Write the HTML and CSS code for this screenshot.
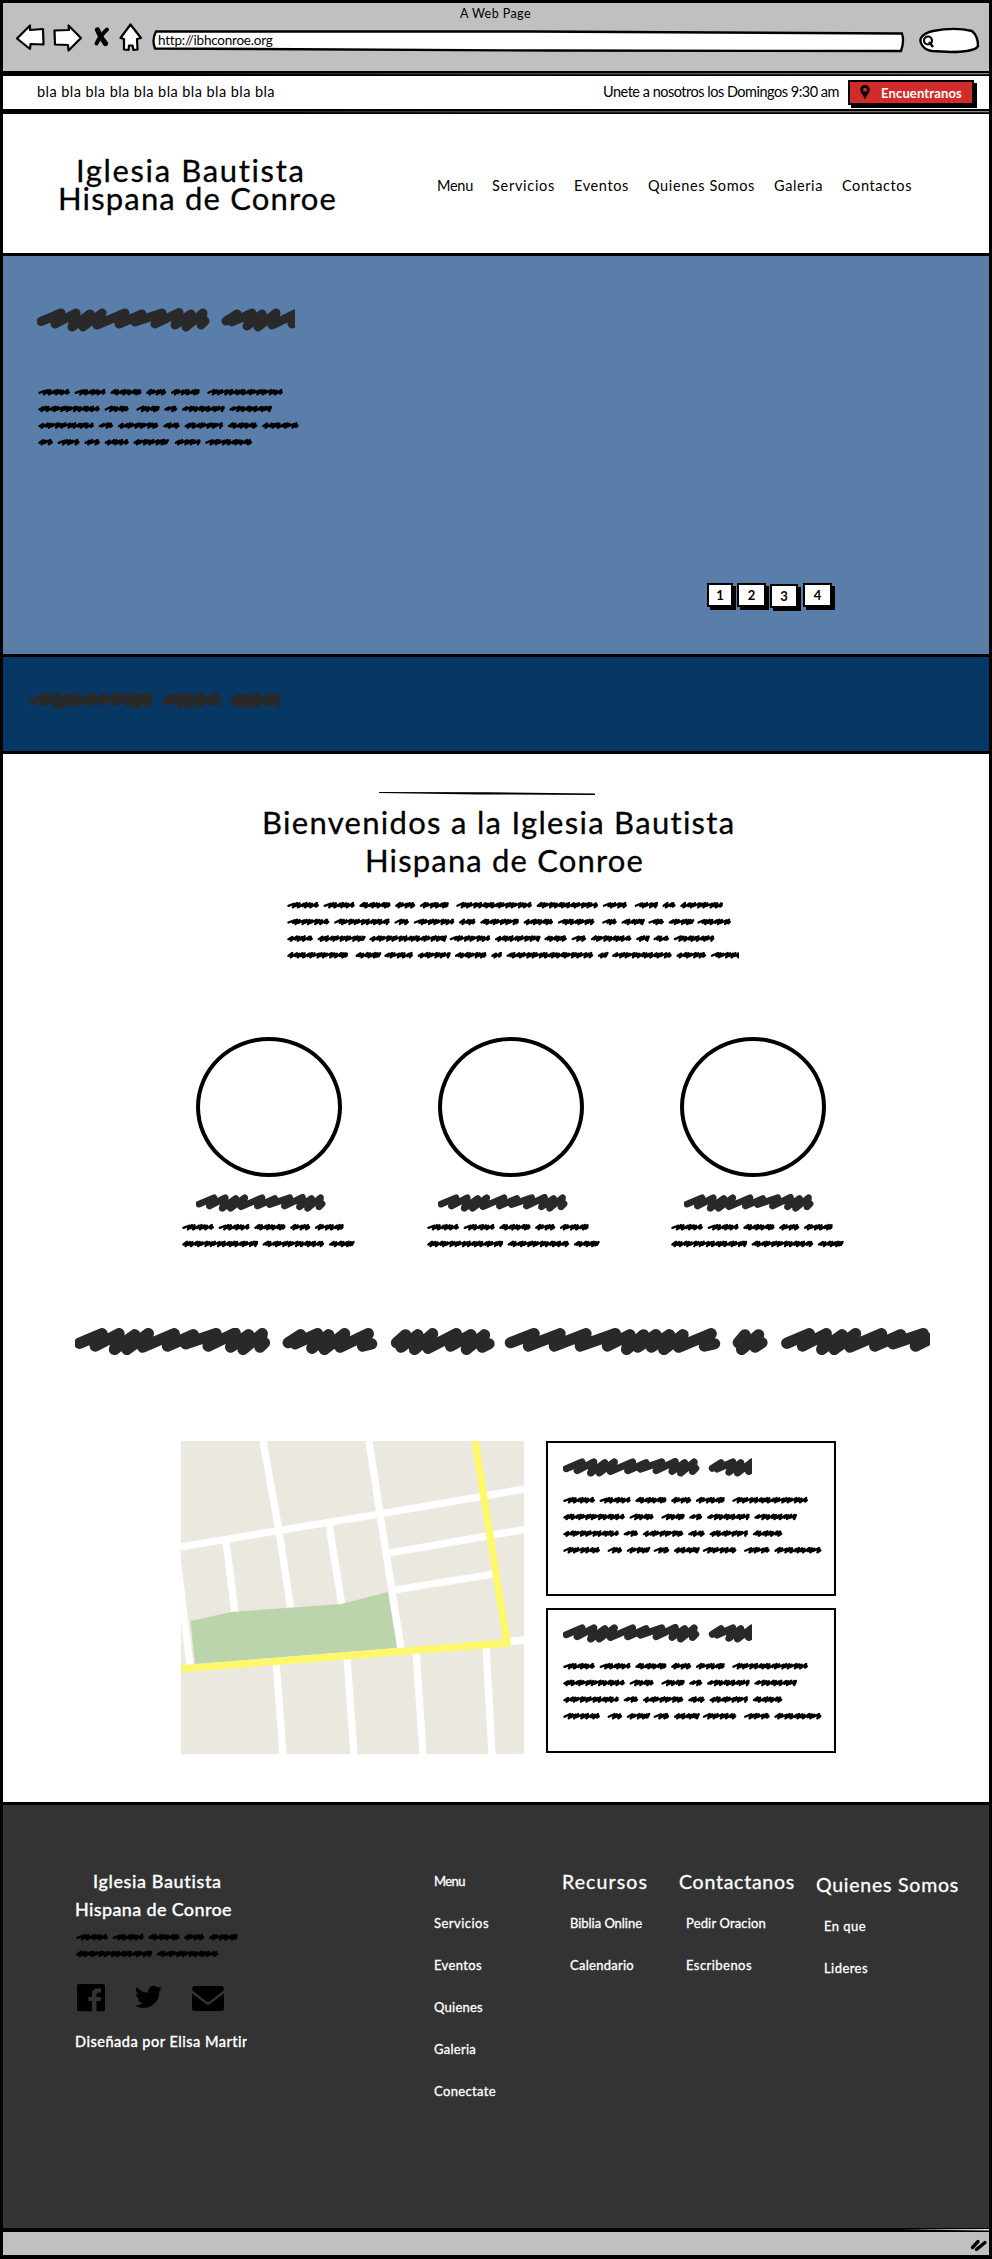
FILE: index.html
```html
<!DOCTYPE html>
<html lang="es">
<head>
<meta charset="utf-8">
<title>Iglesia Bautista Hispana de Conroe</title>
<link rel="stylesheet" href="styles.css">
</head>
<body>
<div class="window">
  <header class="chrome">
    <div class="chrome-title"><span data-fit="71">A Web Page</span></div>
    <div class="toolbar">
      <svg class="tools" width="130" height="30" viewBox="0 0 130 30">
        <g fill="#fff" stroke="#000" stroke-width="2.2" stroke-linejoin="round">
          <path d="M2 15.500L15 2.500L15 7L28 6L28.500 21.500L15.500 21L15 26Z"/>
          <path d="M39.500 7.500L54 7L53.500 2.500L66 15L53.500 27.500L53 22L40 21.500Z"/>
          <path d="M115.500 1.500L126 15L122 16L122.500 26.500L118.500 27L117.500 22.500L114 22.500L113.500 27L109 26.500L109 16L105.500 15Z"/>
        </g>
        <g stroke="#000" stroke-width="5.200" stroke-linecap="round" fill="none"><path d="M82.500 7Q85 14 90.500 20.500"/><path d="M92 6.500Q85 13 81.500 20.500" stroke-width="4"/></g>
      </svg>
      <div class="url">
        <svg class="backdrop" width="754" height="24" viewBox="0 0 754 24"><path d="M5 2.500L380 2.500L751 4.500Q753.500 12 750 22L400 21.500L4 19.500Q.5 11 5 2.500Z" fill="#fff" stroke="#000" stroke-width="2.300"/></svg>
        <span data-fit="114">http://ibhconroe.org</span>
      </div>
      <svg class="search" width="62" height="28" viewBox="0 0 62 28"><path d="M15 4C30 1 44 1.500 54 4Q60 9 60 19C58 24 42 25 33 25L14 24C5 23 1 15 3 11Q6 6 15 4Z" fill="#fff" stroke="#000" stroke-width="2.400"/><circle cx="10" cy="13.500" r="4" fill="none" stroke="#000" stroke-width="2.200"/><path d="M11 15L15 20" stroke="#000" stroke-width="2.500"/></svg>
    </div>
  </header>
  <svg class="rule" height="5" viewBox="0 0 986 5" preserveAspectRatio="none"><path d="M0 0H986V5H0Z"/><path d="M150 2.800L986 2V3.200L500 3.300Z" fill="#888"/></svg>

  <div class="topbar">
    <span class="slogan" data-fit="238">bla bla bla bla bla bla bla bla bla bla</span>
    <span class="invite" data-fit="236">Unete a nosotros los Domingos 9:30 am</span>
    <a class="find">
      <svg width="10" height="15" viewBox="0 0 10 15"><path fill-rule="evenodd" d="M5 0C2 0 .3 2.300.3 4.700C.3 8 3.500 10 5 14.500C6.500 10 9.700 8 9.700 4.700C9.700 2.300 8 0 5 0ZM5 2.800A2 2 0 1 1 5 6.800A2 2 0 1 1 5 2.800Z"/></svg>
      <span data-fit="81">Encuentranos</span>
    </a>
  </div>
  <svg class="rule" height="5" viewBox="0 0 986 5" preserveAspectRatio="none"><path d="M0 0H986V5H0Z"/><path d="M150 2.800L986 2V3.200L500 3.300Z" fill="#888"/></svg>

  <div class="masthead">
    <h1 class="brand"><span class="brand-top" data-fit="230">Iglesia Bautista</span><span data-fit="279">Hispana de Conroe</span></h1>
    <nav class="menu">
      <a data-fit="36">Menu</a><a data-fit="63">Servicios</a><a data-fit="55">Eventos</a><a data-fit="107">Quienes Somos</a><a data-fit="49">Galeria</a><a data-fit="70">Contactos</a>
    </nav>
  </div>
  <div class="line"></div>

  <section class="hero">
    <svg class="heading" data-scale="1" data-width="258"></svg>
    <svg class="copy" data-lines="32 31.500 31.500 20.500 29 | 76/62 24.500 | 23.500 13.500 43 42.500/56 15 41 17 39 30 37/15 22.500 16 24.500 34 | 26 47.500"></svg>
    <div class="pager"><a class="p1">1</a><a class="p2">2</a><a class="p3">3</a><a class="p4">4</a></div>
  </section>
  <div class="line"></div>
  <section class="band"><svg class="heading" data-scale=".715" data-width="250"></svg></section>
  <div class="line"></div>

  <main>
    <section class="welcome">
      <svg class="stroke" width="216" height="4" viewBox="0 0 216 4"><path d="M0 0L110 .3L216 1.600V3L100 2.400L0 1Z"/></svg>
      <h2><span class="w1" data-fit="474">Bienvenidos a la Iglesia Bautista</span><span class="w2" data-fit="279">Hispana de Conroe</span></h2>
      <svg class="copy" data-width="452" data-lines="32 31.500 31.500 20.500 29 | 76 62 24.500 | 23.500 13.500 43/42.500 56 15 41 17 39 30 37 | 15 22.500 16 24.500 34/26 47.500 76 41 45 23 15 41 13 16 41/61 | 24.500 29 33 32 11 87 10 60 30 30"></svg>
    </section>
    <section class="trio">
      <div class="person"><div class="avatar"></div><svg class="heading" data-scale=".75" data-width="130"></svg><svg class="copy" data-lines="32 31.500 31.500 20.500 29/76 62 24.500"></svg></div>
      <div class="person second"><div class="avatar"></div><svg class="heading" data-scale=".75" data-width="130"></svg><svg class="copy" data-lines="32 31.500 31.500 20.500 29/76 62 24.500"></svg></div>
      <div class="person third"><div class="avatar"></div><svg class="heading" data-scale=".75" data-width="130"></svg><svg class="copy" data-lines="32 31.500 31.500 20.500 29/76 62 24.500"></svg></div>
    </section>
    <section class="banner"><svg class="heading" data-scale="1.128" data-width="855" data-pen="10"></svg></section>
    <section class="place">
      <svg class="map" width="343" height="313" viewBox="0 0 343 313">
        <path fill="#ebe8e0" d="M0 0H343V313H0Z"/>
        <g fill="none" stroke="#fff" stroke-width="7.300">
          <path d="M0 106L98 89.500L199 73L343 48"/>
          <path d="M82 0L98 90L110 170"/><path d="M188 0L199 73L220 208"/>
          <path d="M45 100L54 172"/><path d="M148 84L161 165"/>
          <path d="M208 112L343 88.500"/><path d="M214 149L312 133"/>
          <path d="M-3 125L9 225"/><path d="M325 201L343 199"/>
          <path d="M95 220L102 313"/><path d="M166 217L173 313"/><path d="M235 210L242 313"/><path d="M305 205L311 313"/>
        </g>
        <path fill="#bcd4ac" d="M9.500 180L50 171L160 163L207 151L216 207L14 223Z"/>
        <path d="M-2 228L326 202L294 0" fill="none" stroke="#fff86b" stroke-width="7.300"/>
      </svg>
      <div class="cards">
        <article class="card"><svg class="heading" data-scale=".79" data-width="189"></svg><svg class="copy" data-lines="32 31.500 31.500 20.500 29 | 76/62 24.500 | 23.500 13.500 43 42.500/56 15 41 17 39 30/37 | 15 22.500 16 24.500 34 | 26 47.500"></svg></article>
        <article class="card low"><svg class="heading" data-scale=".79" data-width="189"></svg><svg class="copy" data-lines="32 31.500 31.500 20.500 29 | 76/62 24.500 | 23.500 13.500 43 42.500/56 15 41 17 39 30/37 | 15 22.500 16 24.500 34 | 26 47.500"></svg></article>
      </div>
    </section>
  </main>
  <div class="line"></div>

  <footer>
    <div class="about">
      <div class="foot-brand"><span class="foot-top" data-fit="129">Iglesia Bautista</span><span data-fit="157">Hispana de Conroe</span></div>
      <svg class="copy" data-lines="32 31.500 31.500 20.500 29/76 62"></svg>
      <div class="social">
        <svg width="28" height="28" viewBox="0 0 28 28"><path d="M2 0H26Q28 0 28 2V25.500Q28 27.300 26 27.300H19.500V17H23.500L24 13H19.500V10.500Q19.500 8.500 21.500 8.500H24V4.500H20.500Q15 4.500 15 10V13H11.500V17H15V27.300H2Q0 27.300 0 25.500V2Q0 0 2 0Z"/></svg>
        <svg class="bird" width="27" height="24" viewBox="0 0 24 20"><path d="M24 2.400a10 10 0 0 1-2.800.8A5 5 0 0 0 23.300.5a10 10 0 0 1-3.100 1.200A4.900 4.900 0 0 0 11.800 6.200 14 14 0 0 1 1.700 1a4.900 4.900 0 0 0 1.500 6.600A5 5 0 0 1 1 7v.1a4.900 4.900 0 0 0 3.900 4.800 5 5 0 0 1-2.200.1 4.900 4.900 0 0 0 4.600 3.400A9.900 9.900 0 0 1 0 17.500 14 14 0 0 0 21.500 5a10 10 0 0 0 2.500-2.600Z"/></svg>
        <svg class="mail" width="32" height="25" viewBox="0 0 32 25"><path d="M3 0H29Q32 0 32 3L31 5L17.500 15.500Q16 16.500 14.500 15.500L1 5L0 3Q0 0 3 0Z"/><path d="M0 7.500L14 18Q16 19.300 18 18L32 7.500V22Q32 25 29 25H3Q0 25 0 22Z"/></svg>
      </div>
      <div class="credit"><span data-fit="176">Diseñada por Elisa Martin</span></div>
    </div>
    <ul class="col links">
      <li><span data-fit="31">Menu</span></li><li><span data-fit="55">Servicios</span></li><li><span data-fit="48">Eventos</span></li><li><span data-fit="49">Quienes</span></li><li><span data-fit="42">Galeria</span></li><li><span data-fit="62">Conectate</span></li>
    </ul>
    <div class="col resources"><h3><span data-fit="86">Recursos</span></h3><ul><li><span data-fit="72">Biblia Online</span></li><li><span data-fit="64">Calendario</span></li></ul></div>
    <div class="col contact"><h3><span data-fit="116">Contactanos</span></h3><ul><li><span data-fit="80">Pedir Oracion</span></li><li><span data-fit="66">Escribenos</span></li></ul></div>
    <div class="col who"><h3><span data-fit="143">Quienes Somos</span></h3><ul><li><span data-fit="42">En que</span></li><li><span data-fit="44">Lideres</span></li></ul></div>
  </footer>
  <svg class="rule thin" height="4" viewBox="0 0 986 4" preserveAspectRatio="none"><path d="M0 0H986V4H0Z"/><path d="M900 1.500L986 1V2.500Z" fill="#ddd"/></svg>
  <div class="status"><svg width="18" height="14" viewBox="0 0 18 14"><path d="M2.500 9.500L8 3.500M6.500 11.500L15 4.500" stroke="#000" stroke-width="3.400" stroke-linecap="round"/></svg></div>
</div>
<script src="scribble.js"></script>
</body>
</html>
```
FILE: styles.css
```css
* { box-sizing: border-box; }
body { margin: 0; background: #fff; color: #000; font: 14.5px/20px Lato, "Open Sans", sans-serif; }
h1, h2, h3, ul { margin: 0; padding: 0; font-weight: 400; list-style: none; }
svg { display: block; flex: none; }
[data-fit] { white-space: nowrap; display: inline-block; }
.window { width: 992px; height: 2259px; border: 3px solid #000; border-bottom-width: 4px; overflow: hidden; }
.line { height: 3px; background: #000; }
.rule { width: 100%; }

.chrome { height: 68px; background: #c0c0c0; }
.chrome-title { height: 20px; padding: 2px 0 0 457px; font-size: 12.5px; line-height: 17px; }
.toolbar { display: flex; align-items: flex-start; }
.tools { margin-left: 12px; }
.url { position: relative; width: 754px; height: 24px; margin: 6px 0 0 6px; padding: 0 0 0 7px; font-size: 13.500px; line-height: 22px; }
.url span { position: relative; }
.backdrop { position: absolute; left: 0; top: 0; }
.search { margin: 4px 0 0 13px; }

.topbar { display: flex; align-items: flex-start; height: 33px; padding: 5px 0 0 34px; }
.slogan { width: 238px; }
.invite { margin-left: 328px; }
.find { display: flex; align-items: center; width: 126px; height: 25px; margin: -1px 0 0 9px; padding-left: 10px; gap: 11px; background: #d22b2b; border: 2px solid #000; box-shadow: 3px 3px 0 #000; color: #fff; font-size: 13px; font-weight: 700; }
.slogan, .invite { padding-top: 1px; }

.masthead { display: flex; height: 139px; }
.brand { width: 434px; padding: 42px 0 0 55px; font-size: 31px; line-height: 28px; -webkit-text-stroke: .3px #000; }
.brand span { display: block; width: max-content; }
.brand .brand-top { margin-left: 18px; }
.menu { display: flex; gap: 19px; padding-top: 62px; }

.hero { height: 398px; padding: 52px 0 0 34px; background: #5a7eaa; }
.hero .copy { margin: 56px 0 0 1px; }
.pager { display: flex; margin: 137px 0 0 670px; }
.pager a { height: 24px; border: 2px solid #000; background: #fff; box-shadow: 3px 3px 0 #000; font: 700 13px/21px Lato, sans-serif; text-align: center; }
.p1 { width: 26px; margin-right: 4px; }
.p2 { width: 29px; margin-right: 4px; }
.pager .p3 { width: 28px; margin: 1px 5px 0 0; }
.p4 { width: 29px; }

.band { height: 94px; padding: 35px 0 0 27px; background: #073763; }

main { height: 1048px; }
.welcome { height: 283px; padding-top: 38px; }
.stroke { margin-left: 376px; }
.welcome h2 { margin-top: 7px; font-size: 31px; line-height: 38px; -webkit-text-stroke: .3px #000; }
.welcome h2 span { display: block; width: max-content; }
.welcome .w1 { margin-left: 259px; }
.welcome .w2 { margin-left: 362px; }
.welcome .copy { margin: 22px 0 0 284px; }

.trio { display: grid; grid-template-columns: 245px 244px 240px; height: 291px; padding-left: 179px; }
.avatar { width: 146px; height: 140px; margin-left: 14px; border: 4px solid #000; border-radius: 50%; }
.person .heading { margin: 17px 0 0 14px; }
.person .copy { margin-top: 11px; }
.second .avatar, .second .heading { margin-left: 11px; }
.third .avatar { margin-left: 9px; }
.third .heading { margin-left: 13px; }

.banner { height: 113px; padding-left: 72px; }
.place { display: flex; gap: 22px; padding-left: 178px; }
.cards { display: flex; flex-direction: column; gap: 12px; }
.card { width: 290px; height: 155px; padding: 15px 0 0 15px; border: 2.500px solid #000; background: #fff; }
.card .copy { margin-top: 19px; }
.low { height: 145px; padding-top: 14px; }

footer { display: flex; align-items: flex-start; height: 423px; padding: 62px 0 0 72px; background: #333; color: #fff; font-weight: 500; }
footer [data-fit] { -webkit-text-stroke: .3px currentColor; }
.about { width: 359px; }
.foot-brand { font-size: 18px; line-height: 28px; }
.foot-brand span { display: block; width: max-content; }
.foot-brand .foot-top { margin-left: 18px; }
.about .copy { margin: 10px 0 0 1px; }
.social { display: flex; height: 28px; margin: 26px 0 0 2px; }
.bird { margin: 1px 0 0 30px; }
.mail { margin: 2px 0 0 30px; }
.credit { width: 172px; height: 24px; margin-top: 18px; overflow: hidden; line-height: 24px; }
.col { font-size: 13px; line-height: 42px; }
.col li { height: 42px; }
.links { width: 128px; margin-top: -7px; }
.col h3 { height: 35px; font-size: 19.5px; line-height: 29px; }
.col ul { padding-left: 8px; }
ul.links { padding-left: 0; }
.resources { width: 117px; }
.contact { width: 137px; }
.contact ul { padding-left: 7px; }
.who { margin-top: 3px; }
.status { display: flex; justify-content: flex-end; height: 24px; padding: 6px 1px 0 0; background: #c0c0c0; }
```
FILE: scribble.js
```js
const NS = 'http://www.w3.org/2000/svg';

// Heading words: start offset, then alternating crest and trough points.
const HEADING = [
  [0, '4 13.500 24 5 18 16 39 5 35 19 53 6 46 19 65 5 60 17 88 5 82 16 105 6 98 14 125 5 118 16 142 4.500 138 17 154 6 149 19 166 5 164 17 168 13'],
  [185, '4 13 15 6 10 14 30 5 25 18 40 6 36 19 54 5 50 17 75 5 70 16 78 14'],
  [281, '4 13 12 6 8 17 23 6 20 19 36 5 32 18 57 5 52 16 70 6 66 19 82 6 80 17 86 14'],
  [382, '4 13 25 5 20 16 48 5 43 16 71 5 66 16 97 5 90 16 110 6 107 19 122 6 117 17 133 6 129 17 145 6 140 19 157 6 153 17 182 5 176 16 185 14'],
  [583, '5 13 11 6 8 19 23 6 20 17 26 13'],
  [627, '4 13.500 24 5 18 16 39 5 35 19 53 6 46 19 65 5 60 17 88 5 82 16 105 6 98 14 125 5 118 16 142 4.500 138 17']
];

function addPath(svg, d, color, width, transform) {
  const path = document.createElementNS(NS, 'path');
  path.setAttribute('d', d);
  path.setAttribute('fill', 'none');
  path.setAttribute('stroke', color);
  path.setAttribute('stroke-width', width);
  path.setAttribute('stroke-linecap', 'round');
  path.setAttribute('stroke-linejoin', 'round');
  if (transform) path.setAttribute('transform', transform);
  svg.appendChild(path);
}

document.querySelectorAll('.heading').forEach(svg => {
  const scale = +svg.dataset.scale;
  svg.setAttribute('width', svg.dataset.width);
  svg.setAttribute('height', Math.round(24 * scale));
  HEADING.forEach(([x, points]) => {
    if (x * scale < +svg.dataset.width) addPath(svg, 'M' + points, '#292929', svg.dataset.pen || 9, `scale(${scale}) translate(${x} 0)`);
  });
});

// Body copy: each number is a word width, a bar is a wider space.
document.querySelectorAll('.copy').forEach(svg => {
  const lines = svg.dataset.lines.split('/');
  let widest = 0;
  lines.forEach((line, row) => {
    const y = 4 + row * 16.67;
    let x = 0;
    line.split(' ').forEach((token, index) => {
      if (token === '|') { x += 3; return; }
      const w = +token;
      let px = x + 1.4;
      let d = `M${px} ${y + .8}`;
      let n = Math.round(w * 2) + index;
      while (px < x + w - 5) {
        const step = [2.4, 4.8, 2.5, 2.6, 4.6, 2.4, 3][n++ % 7];
        d += `L${px + step + 1.3} ${y - 2 + n % 3 * .3}L${px + step - .3} ${y + 1.2 + n % 2 * 1.2}`;
        px += step;
      }
      d += `L${x + w - 2.3} ${y - 1.7}L${x + w - 2.8} ${y + 1.6}L${x + w - 1.2} ${y + .3}`;
      addPath(svg, d, '#000', 2.3);
      x += w + 4.3;
    });
    widest = Math.max(widest, x);
  });
  svg.setAttribute('width', svg.dataset.width || Math.ceil(widest));
  svg.setAttribute('height', Math.round(8 + (lines.length - 1) * 16.67));
});

// Spread each label's letters to its set width.
document.querySelectorAll('[data-fit]').forEach(label => {
  const range = document.createRange();
  range.selectNodeContents(label);
  const natural = range.getBoundingClientRect().width;
  label.style.letterSpacing = (label.dataset.fit - natural) / label.textContent.length + 'px';
});
```
